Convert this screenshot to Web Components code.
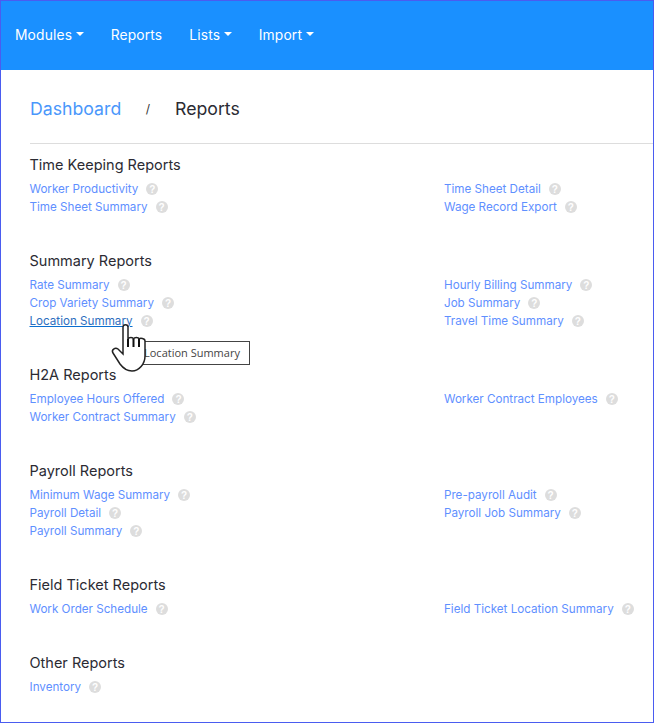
<!DOCTYPE html>
<html><head><meta charset="utf-8"><style>
html,body{margin:0;padding:0;background:#fff}
body{font-family:"Inter","Lato",sans-serif}
</style></head><body>
<app-frame>
<top-nav>
<nav-item caret>Modules</nav-item><nav-item>Reports</nav-item><nav-item caret>Lists</nav-item><nav-item caret>Import</nav-item>
</top-nav>
<bread-crumbs></bread-crumbs>
<report-section title="Time Keeping Reports" left="Worker Productivity|Time Sheet Summary" right="Time Sheet Detail|Wage Record Export"></report-section>
<report-section title="Summary Reports" left="Rate Summary|Crop Variety Summary|Location Summary" right="Hourly Billing Summary|Job Summary|Travel Time Summary"></report-section>
<report-section title="H2A Reports" left="Employee Hours Offered|Worker Contract Summary" right="Worker Contract Employees"></report-section>
<report-section title="Payroll Reports" left="Minimum Wage Summary|Payroll Detail|Payroll Summary" right="Pre-payroll Audit|Payroll Job Summary"></report-section>
<report-section title="Field Ticket Reports" left="Work Order Schedule" right="Field Ticket Location Summary"></report-section>
<report-section title="Other Reports" left="Inventory" right=""></report-section>
<hover-tip>Location Summary</hover-tip>
</app-frame>
<script>
const F='"Inter","Lato",sans-serif';
class AppFrame extends HTMLElement{constructor(){super();this.attachShadow({mode:'open'}).innerHTML=`<style>
:host{display:block;box-sizing:border-box;width:654px;height:723px;border:1px solid #4a5cf0;overflow:hidden;position:relative;background:#fff;font-family:${F}}
</style><slot></slot>`}}
class TopNav extends HTMLElement{constructor(){super();this.attachShadow({mode:'open'}).innerHTML=`<style>
:host{display:flex;align-items:center;height:69px;background:#1a90ff;padding-left:14px;gap:27px;padding-bottom:2px;box-sizing:border-box}
</style><slot></slot>`}}
class NavItem extends HTMLElement{constructor(){super();this.attachShadow({mode:'open'}).innerHTML=`<style>
:host{display:inline-flex;align-items:center;color:#fff;font-size:13.8px;letter-spacing:.16px;font-weight:400}
i{display:none;width:0;height:0;border:4.5px solid transparent;border-top-color:#fff;border-bottom:0;margin-left:3.5px;margin-bottom:2px}
:host([caret]) i{display:block}
</style><slot></slot><i></i>`}}
class BreadCrumbs extends HTMLElement{constructor(){super();this.attachShadow({mode:'open'}).innerHTML=`<style>
:host{display:flex;align-items:center;height:74px;margin-left:29px;padding-top:4px;box-sizing:border-box;border-bottom:1px solid #ddd;font-size:17.7px;margin-bottom:9px}
a{color:#4a97fb}
s{text-decoration:none;font-size:12px;color:#333;margin:0 25px 0 24.5px}
b{font-weight:400;color:#2b2b33}
</style><a>Dashboard</a><s>/</s><b>Reports</b>`}}
class ReportSection extends HTMLElement{connectedCallback(){
const mk=s=>(s||'').split('|').filter(Boolean).map(t=>`<report-link>${t}</report-link>`).join('');
this.attachShadow({mode:'open'}).innerHTML=`<style>
:host{display:block;padding-left:28.5px;margin-bottom:33px}
h3{margin:0 0 3px;font-weight:400;font-size:14.5px;line-height:24px;color:#2b2b33}
.g{display:grid;grid-template-columns:414.5px 1fr}
.c{display:flex;flex-direction:column}
</style><h3>${this.getAttribute('title')}</h3><div class="g"><div class="c">${mk(this.getAttribute('left'))}</div><div class="c">${mk(this.getAttribute('right'))}</div></div>`}}
class ReportLink extends HTMLElement{connectedCallback(){
const hot=this.textContent==='Location Summary';
this.attachShadow({mode:'open'}).innerHTML=`<style>
:host{display:flex;align-items:center;height:18px;font-size:11.65px;color:${hot?'#2f6fc0':'#5f90ff'}}
a{${hot?'text-decoration:underline;text-decoration-color:#0b6fd0;':''}}
span{display:flex;align-items:center;justify-content:center;width:12px;height:12px;border-radius:50%;background:#ddd;color:#fff;font:700 10px "Liberation Sans",sans-serif;margin-left:8px}
</style><a><slot></slot></a><span>?</span>`}}
class HoverTip extends HTMLElement{constructor(){super();this.attachShadow({mode:'open'}).innerHTML=`<style>
:host{position:absolute;left:128px;top:340px;width:121px;height:24px;box-sizing:border-box;border:1px solid #444;background:#fff;color:#444;font:11px "Open Sans",sans-serif;line-height:22px;padding-left:14px;white-space:nowrap}
svg{position:absolute;left:-25px;top:-22px;overflow:visible}
</style><slot></slot><svg width="50" height="55" viewBox="0 0 50 55"><path d="M18 7c0-3 5-3 5 0V19c1-2 5-2 5.5 0c1-2 5-2 5.5 0c1-1 6-1 6 2V36c0 8-6 15-13 15c-6 0-9-3-12-7L8 33c-2-3 2-6 5-4l5 5z" fill="#fff" stroke="#222" stroke-width="1.5"/><path d="M23 19v8M28.5 19v8M34 19v8" stroke="#111" stroke-width="2" fill="none"/></svg>`}}
for(const [n,c] of [['app-frame',AppFrame],['top-nav',TopNav],['nav-item',NavItem],['bread-crumbs',BreadCrumbs],['report-section',ReportSection],['report-link',ReportLink],['hover-tip',HoverTip]])customElements.define(n,c);
</script>
</body></html>
